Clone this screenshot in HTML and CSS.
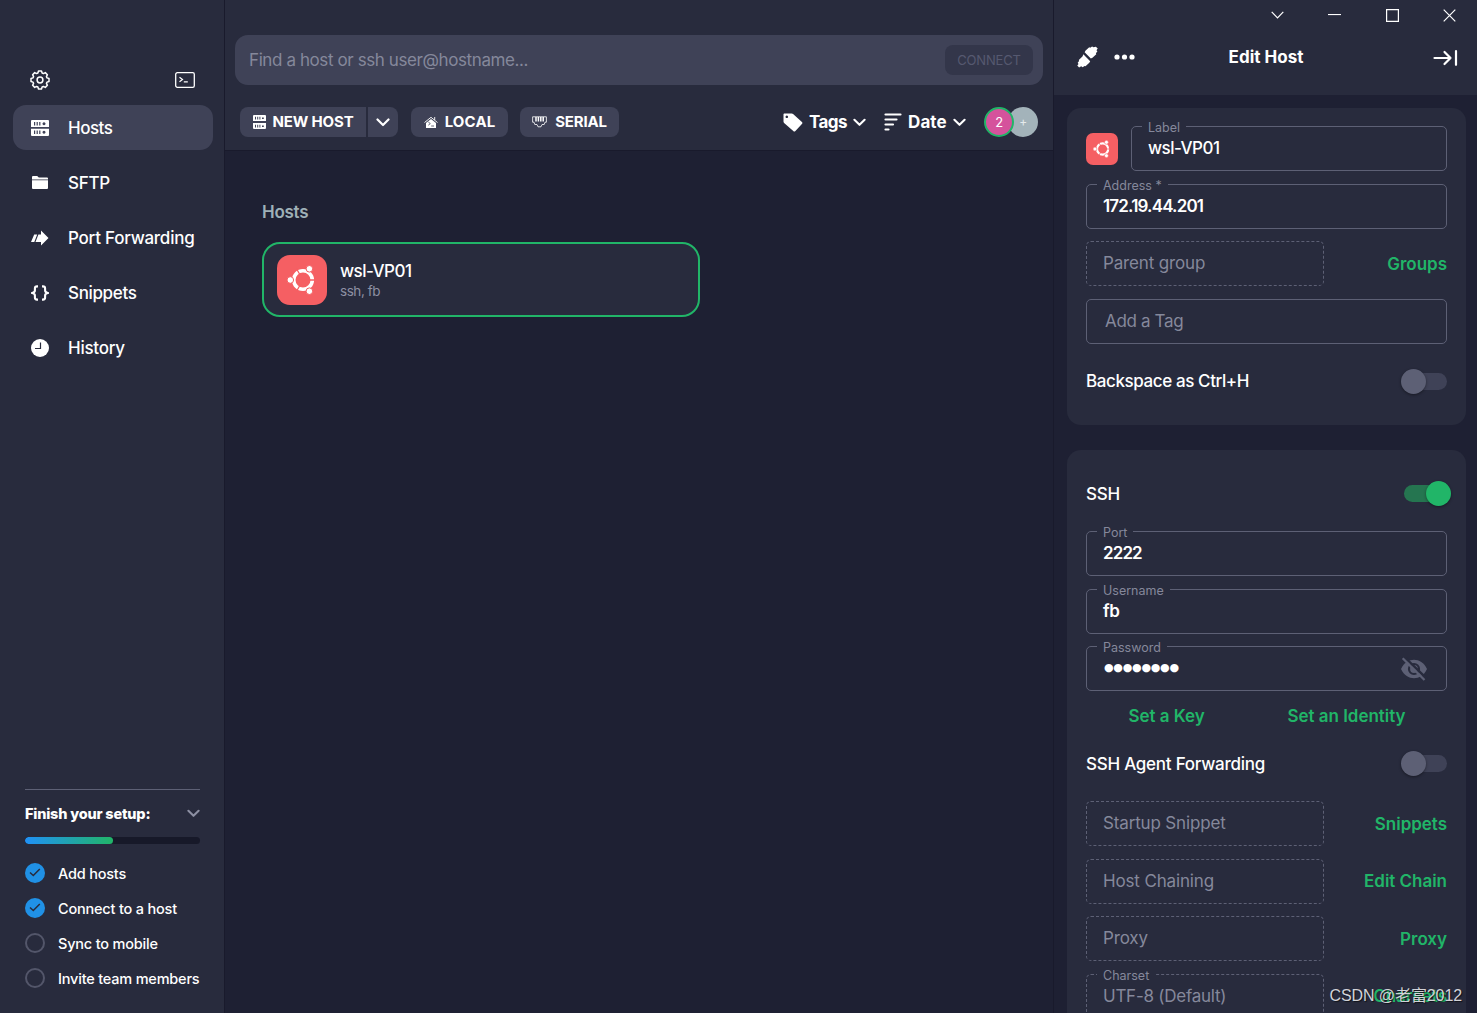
FILE: index.html
```html
<!DOCTYPE html>
<html lang="en">
<head>
<meta charset="utf-8">
<title>Hosts</title>
<link rel="stylesheet" href="styles.css">
</head>
<body>
<svg class="defs" aria-hidden="true">
  <symbol id="server" viewBox="0 0 18 16">
    <path fill-rule="evenodd" d="M1 0h16a1 1 0 0 1 1 1v6H0V1a1 1 0 0 1 1-1zM3 2v3.6h1.2V2zM5.6 2v3.6h1.2V2zM8.2 2v3.6h1.2V2zM13 2.300a1.500 1.500 0 1 0 .01 0zM0 8.700h18v6.300a1 1 0 0 1-1 1H1a1 1 0 0 1-1-1zM3 10.500v3.600h1.200v-3.600zM5.600 10.500v3.600h1.200v-3.600zM8.200 10.500v3.600h1.200v-3.600zM13 10.700a1.500 1.500 0 1 0 .01 0z"/>
  </symbol>
  <symbol id="chevron" viewBox="0 0 14 9"><path d="M1.500 1.500L7 7l5.500-5.500" fill="none" stroke="currentColor" stroke-width="2.200" stroke-linecap="round" stroke-linejoin="round"/></symbol>
  <symbol id="ubuntu" viewBox="0 0 30 30">
    <circle cx="16" cy="15" r="9.300" fill="none" stroke="currentColor" stroke-width="3.600"/>
    <path d="M16 15H29M16 15L9.500 3.700M16 15L9.500 26.300" stroke="#f55f63" stroke-width="1.300"/>
    <g fill="currentColor" stroke="#f55f63" stroke-width="1"><circle cx="3.300" cy="15" r="3.300"/><circle cx="22.400" cy="3.800" r="3.300"/><circle cx="22.400" cy="26.200" r="3.300"/></g>
  </symbol>
</svg>

<div class="app">
  <aside class="sidebar">
    <div class="tools">
      <svg width="20" height="20" viewBox="0 0 20 20" fill="none" stroke="#fff" stroke-width="1.500" stroke-linejoin="round"><path d="M8.500 1h3l.6 2 1.300.55L15.300 2.600l2.100 2.100-.95 1.900.55 1.300 2 .6v3l-2 .6-.55 1.300.95 1.900-2.100 2.100-1.900-.95-1.300.55-.6 2h-3l-.6-2-1.300-.55-1.900.95-2.100-2.100.95-1.900L3 12.100l-2-.6v-3l2-.6.55-1.300-.95-1.900 2.100-2.100 1.900.95L7.900 3z"/><circle cx="10" cy="10" r="2.900"/></svg>
      <svg width="20" height="16" viewBox="0 0 20 16" fill="none" stroke="#fff"><rect x=".7" y=".7" width="18.600" height="14.600" rx="1.600" stroke-width="1.300"/><path d="M4.500 5.200l3 2.300-3 2.300M8.800 9.800h4" stroke-width="1.200"/></svg>
    </div>
    <nav class="nav">
      <a class="nav-item active"><span class="nav-icon"><svg width="18" height="16" fill="#fff"><use href="#server"/></svg></span><span class="t-short">Hosts</span></a>
      <a class="nav-item"><span class="nav-icon"><svg width="16" height="13" viewBox="0 0 16 13" fill="#fff"><path d="M0 3.400V1a1 1 0 0 1 1-1h4.200l1.600 1.600H15a1 1 0 0 1 1 1v.8zM0 4.200h16V12a1 1 0 0 1-1 1H1a1 1 0 0 1-1-1z"/></svg></span><span>SFTP</span></a>
      <a class="nav-item"><span class="nav-icon"><svg width="18" height="16" viewBox="0 0 18 16" fill="#fff"><path d="M3.200 4.500h3L3.300 12H0zM7.400 4.500H10V.4L17.500 8 10 15.400V12H4.500z"/></svg></span><span>Port Forwarding</span></a>
      <a class="nav-item"><span class="nav-icon"><svg width="18" height="16" viewBox="0 0 18 16" fill="none" stroke="#fff" stroke-width="2.100"><path d="M7 1.400H6Q3.900 1.400 3.900 3.500v2Q3.900 7.300 1.200 8q2.700.7 2.700 2.500v2q0 2.100 2.100 2.100h1M11 1.400h1q2.100 0 2.100 2.100v2q0 1.800 2.700 2.500-2.700.7-2.700 2.500v2q0 2.100-2.100 2.100h-1"/></svg></span><span class="t-snippets">Snippets</span></a>
      <a class="nav-item"><span class="nav-icon"><svg width="18" height="18" viewBox="0 0 18 18"><circle cx="9" cy="9" r="9" fill="#fff"/><path d="M9.500 3.500V9.500H4" fill="none" stroke="#282b3d" stroke-width="1.200"/></svg></span><span>History</span></a>
    </nav>
    <section class="setup">
      <header class="setup-head"><b>Finish your setup:</b><svg width="13" height="9"><use href="#chevron"/></svg></header>
      <div class="progress"><div class="progress-fill"></div></div>
      <ul class="steps">
        <li><i class="dot done"><svg width="12" height="9" viewBox="0 0 12 9"><path d="M1 4.500l3.300 3L10.800 1" fill="none" stroke="#282b3d" stroke-width="1.500"/></svg></i><span>Add hosts</span></li>
        <li><i class="dot done"><svg width="12" height="9" viewBox="0 0 12 9"><path d="M1 4.500l3.300 3L10.800 1" fill="none" stroke="#282b3d" stroke-width="1.500"/></svg></i><span>Connect to a host</span></li>
        <li><i class="dot"></i><span>Sync to mobile</span></li>
        <li><i class="dot"></i><span>Invite team members</span></li>
      </ul>
    </section>
  </aside>

  <main class="main">
    <header class="topbar">
      <div class="search"><span>Find a host or ssh user@hostname...</span><button class="connect">CONNECT</button></div>
      <div class="actions">
        <div class="split">
          <button class="btn new"><svg width="13" height="14" viewBox="0 0 13 14" fill="#fff"><path fill-rule="evenodd" d="M1 0h11a1 1 0 0 1 1 1v5H0V1a1 1 0 0 1 1-1zM2 1.800v2.800h1V1.800zM4.200 1.800v2.800h1V1.800zM6.400 1.800v2.800h1V1.800zM9 2.400v1.600h1.800V2.400zM0 8h13v5a1 1 0 0 1-1 1H1a1 1 0 0 1-1-1zM2 9.800v2.800h1V9.800zM4.200 9.800v2.800h1V9.800zM6.400 9.800v2.800h1V9.800zM9 10.400v1.600h1.800v-1.600z"/></svg>NEW HOST</button>
          <button class="btn drop"><svg width="14" height="9"><use href="#chevron"/></svg></button>
        </div>
        <button class="btn local"><svg width="14" height="12" viewBox="0 0 14 12"><path d="M.5 6.500L7 1.300l6.500 5.200M10.700 4V1" fill="none" stroke="#fff" stroke-width=".9"/><path d="M7 3l5 4V12H2V7z" fill="#fff"/><path d="M4.300 6l2 1.600-2 1.600M7.200 10H10" fill="none" stroke="#3f4257" stroke-width=".8"/></svg>LOCAL</button>
        <button class="btn serial"><svg width="15" height="12" viewBox="0 0 15 12" fill="none" stroke="#fff"><path d="M.6.8h13.800v5.400H13l-.8 2.300H10l-1 2.300H6L5 8.500H2.800L2 6.200H.6z" stroke-width="1" stroke-opacity=".8"/><path d="M4 1v4.500M6.400 1v4.500M8.800 1v4.500M11.200 1v4.500" stroke-width="1.500"/></svg>SERIAL</button>
        <div class="filters">
          <span class="filter"><svg width="20" height="19" viewBox="0 0 20 19" fill="#fff"><path fill-rule="evenodd" d="M1.500.5h7.200c.6 0 1 .2 1.400.5l8.800 8c.7.700.7 1.400 0 2.100l-6.500 6.800c-.7.700-1.400.7-2.100 0L1.100 10.100C.7 9.700.5 9.200.5 8.600V1.500c0-.6.4-1 1-1zM3.800 2.500a1.300 1.300 0 1 0 .01 0z"/></svg><span class="tags">Tags</span><svg width="13" height="9"><use href="#chevron"/></svg></span>
          <span class="filter"><svg width="18" height="18" viewBox="0 0 18 18" stroke="#fff" stroke-width="2.200" stroke-linecap="round"><path d="M1.500 1.500h15M1.500 6.500h11M1.500 11.500h7.500M1.500 16.500h3"/></svg><span class="date">Date</span><svg width="13" height="9"><use href="#chevron"/></svg></span>
          <span class="avatars"><i class="avatar me">2</i><i class="avatar add">+</i></span>
        </div>
      </div>
    </header>
    <section class="hosts">
      <h2>Hosts</h2>
      <article class="host">
        <span class="os"><svg width="30" height="30"><use href="#ubuntu"/></svg></span>
        <div class="host-text"><strong>wsl-VP01</strong><small>ssh, fb</small></div>
      </article>
    </section>
  </main>

  <aside class="panel">
    <header class="panel-head">
      <div class="window">
        <span><svg width="13" height="8" viewBox="0 0 13 8"><path d="M.7.8l5.800 6 5.800-6"/></svg></span>
        <span><svg width="13" height="3" viewBox="0 0 13 3"><path d="M0 .5h13"/></svg></span>
        <span><svg width="13" height="13" viewBox="0 0 13 13"><path d="M.6.6h11.800v11.800H.6z"/></svg></span>
        <span><svg width="13" height="13" viewBox="0 0 13 13"><path d="M.7.7l11.600 11.600M12.300.7L.7 12.300"/></svg></span>
      </div>
      <div class="panel-title">
        <div class="panel-tools">
          <svg width="21" height="22" viewBox="0 0 22 22" fill="#fff"><path d="M19.800.3l1.900 1.900-1.300 1.600 1 1.200-1.600 2 .4 1-4 3.900-1.700.7L8 6.100l.8-1.600 4-3.600 1 .3 2-1.300 1.500.9zM6.600 8.200l7.200 7.200-.9 1.600-4 3.700-1-.3-2 1.300-1.500-.9L2.200 22 .3 20l1.300-1.600-.9-1.300 1.500-2-.3-1 4-4z"/></svg>
          <svg width="21" height="6" viewBox="0 0 21 6" fill="#fff"><circle cx="3" cy="3" r="2.600"/><circle cx="10.500" cy="3" r="2.600"/><circle cx="18" cy="3" r="2.600"/></svg>
        </div>
        <h1>Edit Host</h1>
        <svg class="collapse" width="25" height="16" viewBox="0 0 25 16" fill="none" stroke="#fff" stroke-width="2.200" stroke-linecap="round" stroke-linejoin="round"><path d="M1.500 8h16M11.500 2l6 6-6 6M23 1.200v13.600"/></svg>
      </div>
    </header>
    <div class="cards">
      <section class="card general">
        <div class="label-row">
          <span class="os small"><svg width="18" height="18"><use href="#ubuntu"/></svg></span>
          <div class="field"><label>Label</label><span class="value name">wsl-VP01</span></div>
        </div>
        <div class="field"><label>Address *</label><span class="value ip">172.19.44.201</span></div>
        <div class="pair"><div class="field dashed"><span class="hint">Parent group</span></div><a>Groups</a></div>
        <div class="field"><span class="hint tag-hint">Add a Tag</span></div>
        <div class="switch-row"><span class="t-backspace">Backspace as Ctrl+H</span><span class="switch"><i></i></span></div>
      </section>
      <section class="card ssh">
        <div class="switch-row"><span>SSH</span><span class="switch on"><i></i></span></div>
        <div class="field"><label>Port</label><span class="value num">2222</span></div>
        <div class="field"><label>Username</label><span class="value">fb</span></div>
        <div class="field"><label>Password</label><span class="value password"><span class="bullets">●●●●●●●●</span><svg width="28" height="24" viewBox="0 0 28 24"><path d="M1 12C4 5.500 9 2.800 14 2.800S24 5.500 27 12c-3 6.500-8 9.200-13 9.200S4 18.500 1 12z" fill="#5d6075"/><circle cx="14" cy="12" r="5" fill="none" stroke="#282b3d" stroke-width="2.200"/><path d="M4.500.2L27 22" stroke="#282b3d" stroke-width="2.500"/><path d="M2.700 1.300L24.500 23" stroke="#5d6075" stroke-width="2.300"/></svg></span></div>
        <div class="links"><a>Set a Key</a><a>Set an Identity</a></div>
        <div class="switch-row agent"><span>SSH Agent Forwarding</span><span class="switch"><i></i></span></div>
        <div class="pair"><div class="field dashed"><span class="hint">Startup Snippet</span></div><a>Snippets</a></div>
        <div class="pair"><div class="field dashed"><span class="hint">Host Chaining</span></div><a>Edit Chain</a></div>
        <div class="pair"><div class="field dashed"><span class="hint">Proxy</span></div><a>Proxy</a></div>
        <div class="pair"><div class="field dashed"><label>Charset</label><span class="value hint charset">UTF-8 (Default)</span></div><a>Charsets</a></div>
      </section>
    </div>
  </aside>
  <div class="watermark">CSDN @老富2012</div>
</div>
</body>
</html>
```
FILE: styles.css
```css
* { box-sizing: border-box; }
body { margin: 0; background: #1e2033; color: #fff; font: 500 17px/20px Inter, sans-serif; letter-spacing: -.25px; }
button { border: 0; padding: 0; color: inherit; font: inherit; }
svg { display: block; flex: none; }
h1, h2, ul { margin: 0; padding: 0; list-style: none; }
.defs { position: absolute; width: 0; height: 0; }
.app { position: relative; display: grid; grid-template: 1013px / 225px 829px 423px; overflow: hidden; }

/* Sidebar */
.sidebar { display: flex; flex-direction: column; background: #282b3d; border-right: 1px solid #191a2c; padding: 65px 11px 0 13px; }
.tools { display: flex; justify-content: space-between; align-items: center; height: 30px; padding: 0 18px 0 17px; }
.nav { display: grid; gap: 10px; margin-top: 10px; }
.nav-item { display: flex; align-items: center; gap: 19px; height: 45px; padding-left: 18px; border-radius: 13px; }
.nav-item.active { background: #3f4257; }
.nav-icon { display: grid; place-items: center; width: 18px; }
.t-short { letter-spacing: -.5px; }
.t-snippets { letter-spacing: -.35px; }
.setup { margin: auto 13px 17px 12px; border-top: 1px solid #5d6075; font-size: 14.500px; letter-spacing: -.2px; }
.setup-head { display: flex; align-items: center; justify-content: space-between; height: 47px; color: #8d90a3; }
.setup-head b { color: #fff; font-weight: 800; letter-spacing: -.2px; }
.progress { height: 7px; border-radius: 4px; background: #171929; overflow: hidden; }
.progress-fill { width: 50%; height: 100%; border-radius: 4px; background: linear-gradient(90deg, #2091f6, #21b568); }
.steps { margin-top: 11px; padding-bottom: 1px; }
.steps li { display: flex; align-items: center; gap: 13px; height: 35px; white-space: nowrap; }
.steps span { padding-top: 2px; }
.dot { display: grid; place-items: center; flex: none; width: 20px; height: 20px; border: 2px solid #53566a; border-radius: 50%; }
.dot.done { border: 0; background: #2091e6; }

/* Host list */
.main { border-right: 1px solid #191a2c; }
.topbar { height: 151px; padding: 35px 10px 0; background: #282b3d; border-bottom: 1px solid #191a2c; }
.search { display: flex; justify-content: space-between; align-items: center; height: 50px; padding: 0 10px 0 14px; border-radius: 13px; background: #3f4257; color: #85889b; font-weight: 400; letter-spacing: -.4px; }
.connect { width: 88px; height: 30px; border-radius: 8px; background: #33364a; color: #565970; font-size: 13px; letter-spacing: -.18px; }
.actions { display: flex; margin: 22px 5px 0; }
.btn { display: flex; align-items: center; justify-content: center; height: 30px; border-radius: 8px; background: #3f4257; font-size: 15px; font-weight: 700; letter-spacing: -.16px; }
.split { display: flex; gap: 2px; margin-right: 13px; }
.new { width: 126px; gap: 7px; border-radius: 8px 0 0 8px; }
.drop { width: 30px; border-radius: 0 8px 8px 0; }
.local { width: 97px; gap: 7px; margin-right: 12px; letter-spacing: .15px; }
.serial { width: 99px; gap: 8px; letter-spacing: -.2px; }
.filters { display: flex; align-items: center; margin-left: auto; font-weight: 700; }
.filter { display: flex; align-items: center; margin-right: 18px; }
.filter span { width: 38px; margin: 0 6px; }
.filter .tags { letter-spacing: -.6px; }
.filter .date { width: 39px; letter-spacing: .1px; }
.avatars { display: flex; }
.avatar { display: grid; place-items: center; width: 30px; height: 30px; border-radius: 50%; font: 400 13px/1 Inter, sans-serif; }
.me { z-index: 1; border: 2px solid #21b568; background: #d5529c; }
.add { margin-left: -6px; background: #a3b3ba; color: #e5eaec; font-size: 12px; }
.hosts { padding: 51px 37px; }
.hosts h2 { color: #9fb0b7; font-size: 17px; font-weight: 600; }
.host { display: flex; align-items: center; gap: 13px; width: 438px; height: 75px; margin-top: 20px; padding-left: 13px; border: 2px solid #21b568; border-radius: 18px; background: #282b3d; }
.os { display: grid; place-items: center; flex: none; width: 50px; height: 50px; border-radius: 13px; background: #f55f63; }
.host-text { display: grid; margin-top: 3px; }
.host strong { font-weight: 500; letter-spacing: -.5px; }
.host small { color: #8d90a3; font-size: 13.500px; font-weight: 400; letter-spacing: -.45px; }

/* Edit panel */
.panel { min-width: 0; overflow: hidden; }
.panel-head { height: 95px; background: #282b3d; }
.window { display: flex; justify-content: flex-end; height: 30px; margin-right: -1px; }
.window span { display: grid; place-items: center; width: 57.300px; }
.window svg { fill: none; stroke: #fff; stroke-width: 1.200; }
.panel-title { display: grid; grid-template-columns: 1fr auto 1fr; align-items: center; height: 54px; padding: 0 19px 0 23px; }
.panel-tools { display: flex; align-items: center; gap: 16px; }
.panel-title h1 { margin: 0 -1px 0 -4px; font-size: 17px; font-weight: 700; letter-spacing: 0; }
.collapse { justify-self: end; margin-top: 2px; }
.cards { display: grid; gap: 25px; padding: 13px 11px 0 13px; }
.card { display: flex; flex-direction: column; gap: 12.500px; padding: 18px 19px; border-radius: 14px; background: #282b3d; }
.general { height: 317px; }
.ssh { height: 640px; padding-top: 31px; }
.label-row { display: flex; align-items: center; gap: 13px; }
.label-row .field { flex: 1; }
.os.small { width: 32px; height: 32px; border-radius: 7px; }
.field { height: 45px; flex: none; padding: 0 18px 0 10px; border: 1px solid #5d6075; border-radius: 5px; }
.field label { display: block; width: fit-content; height: 14px; margin-top: -7px; padding: 0 6px; background: #282b3d; color: #85889b; font-size: 12.500px; font-weight: 400; line-height: 16px; letter-spacing: 0; }
.value { display: block; margin-top: 4px; padding-left: 6px; font-weight: 600; }
.name { font-weight: 500; letter-spacing: -.5px; }
.ip { letter-spacing: -.83px; }
.num { letter-spacing: -.9px; }
.hint { display: block; padding-left: 6px; color: #85889b; font-weight: 400; line-height: 43px; letter-spacing: -.15px; }
.value.hint { line-height: 20px; letter-spacing: -.25px; }
.hint.tag-hint { padding-left: 8px; letter-spacing: -.35px; }
.dashed { width: 238px; border-style: dashed; }
.pair { display: flex; align-items: center; justify-content: space-between; flex: none; }
.panel a { color: #21b568; font-weight: 600; letter-spacing: -.02px; }
.switch-row { display: flex; align-items: center; justify-content: space-between; height: 25px; }
.general .switch-row { margin-top: 12.500px; }
.t-backspace { letter-spacing: -.4px; }
.switch { display: flex; align-items: center; width: 43px; height: 17px; border-radius: 9px; background: #3f4257; }
.switch i { flex: none; width: 25px; height: 25px; margin-left: -3px; border-radius: 50%; background: #5d6075; box-shadow: 0 1px 3px #0006; }
.switch.on { background: #257550; }
.switch.on i { margin-left: 22px; background: #21b568; }
.ssh > .field:nth-child(2) { margin-top: 12.500px; }
.password { display: flex; align-items: center; justify-content: space-between; height: 24px; margin-top: 3px; }
.bullets { font: 11px/20px "DejaVu Sans", sans-serif; letter-spacing: .75px; margin: -2px 0 0 1px; letter-spacing: -.25px; }
.links { display: flex; justify-content: space-around; height: 25px; line-height: 24px; padding-left: 1px; }
.agent { margin: 10px 0 12.500px; }
.watermark { position: absolute; right: 15px; bottom: 7px; color: #d2d3d8; font: 400 16px/20px "Liberation Sans", "Noto Sans CJK SC", sans-serif; letter-spacing: -.1px; text-shadow: 1px 1px 1px #0009; }
```
